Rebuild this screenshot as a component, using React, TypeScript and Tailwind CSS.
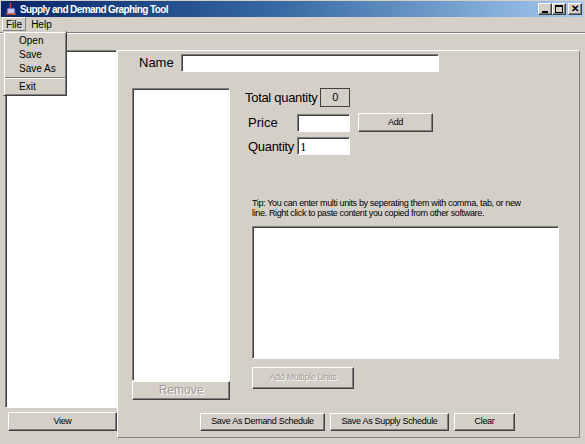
import React from "react";

const raised =
  "border border-t-white border-l-white border-r-[#404040] border-b-[#404040] shadow-[inset_-1px_-1px_0_#808080]";
const sunken =
  "border border-t-[#808080] border-l-[#808080] border-r-white border-b-white shadow-[inset_1px_1px_0_#404040]";

function Btn({
  children,
  className = "",
  disabled = false,
}: {
  children: React.ReactNode;
  className?: string;
  disabled?: boolean;
}) {
  return (
    <div
      className={`${raised} flex items-center justify-center bg-[#d4d0c8] text-[9px] tracking-[-0.3px] ${
        disabled ? "text-[#a09c94] [text-shadow:1px_1px_0_#fff]" : "text-black"
      } ${className}`}
    >
      {children}
    </div>
  );
}

function TitleButton({ children }: { children: React.ReactNode }) {
  return (
    <div className={`${raised} flex h-[12px] w-[14px] items-center justify-center bg-[#d4d0c8]`}>
      {children}
    </div>
  );
}

export default function App() {
  return (
    <div
      className="relative flex h-[444px] w-[585px] flex-col overflow-hidden bg-[#d4d0c8] text-black"
      style={{ fontFamily: '"Liberation Sans", Arial, sans-serif' }}
    >
      {/* title bar */}
      <div className="mx-[1px] mt-[1px] flex h-[16px] items-center bg-gradient-to-r from-[#0a246a] via-[#3a6ea5] to-[#a6caf0] pl-[3px] pr-[2px]">
        <svg width="14" height="14" viewBox="0 0 14 14" className="mr-[2px]">
          <path d="M6 1 C8 3 5 4 7 6" stroke="#e04020" strokeWidth="1.5" fill="none" />
          <rect x="3" y="6" width="8" height="6" rx="1" fill="#c9c3f0" stroke="#3030a0" />
          <path d="M2 12 H12" stroke="#e06020" strokeWidth="1.5" />
        </svg>
        <span className="text-[10px] font-bold tracking-[-0.6px] text-white">
          Supply and Demand Graphing Tool
        </span>
        <div className="ml-auto flex items-center">
          <TitleButton>
            <div className="mt-[5px] h-[2px] w-[6px] bg-black" />
          </TitleButton>
          <TitleButton>
            <div className="h-[8px] w-[8px] border border-t-2 border-black" />
          </TitleButton>
          <div className="ml-[2px]">
            <TitleButton>
              <span className="text-[10px] font-bold leading-none">✕</span>
            </TitleButton>
          </div>
        </div>
      </div>

      {/* menu bar */}
      <div className="flex h-[14px] items-center pl-[2px] text-[10px]">
        <div className="flex h-[14px] items-center border border-t-white border-l-white border-r-[#808080] border-b-[#808080] px-[3px]">
          File
        </div>
        <div className="px-[5px]">Help</div>
      </div>
      <div className="mt-[1px] h-[2px] border-t border-b border-t-[#808080] border-b-white" />

      {/* body */}
      <div className="flex flex-1 pt-[16px] pl-[5px] pr-[5px] pb-[6px]">
        {/* left column */}
        <div className="flex w-[112px] flex-col">
          <div className={`${sunken} h-[358px] bg-white`} />
          <Btn className="ml-[3px] mt-[4px] h-[19px] w-[109px]">View</Btn>
        </div>

        {/* right panel */}
        <div className="flex flex-1 flex-col border border-t-white border-l-white border-r-[#808080] border-b-[#808080]">
          <div className="flex items-center pt-[2px] pl-[21px]">
            <span className="text-[13px]">Name</span>
            <div className={`${sunken} ml-[7px] h-[18px] w-[258px] bg-white`} />
          </div>

          <div className="flex pt-[15px] pl-[14px]">
            <div className="flex flex-col">
              <div className={`${sunken} h-[293px] w-[98px] bg-white`} />
              <Btn disabled className="h-[19px] w-[98px] text-[12px] tracking-normal">
                Remove
              </Btn>
            </div>

            <div className="ml-[15px] flex flex-col">
              <div className="flex items-center">
                <span className="text-[13px] tracking-[-0.3px]">Total quantity</span>
                <div className="ml-[3px] flex h-[19px] w-[30px] items-center justify-center border border-[#404040] text-[11px]">
                  0
                </div>
              </div>
              <div className="mt-[6px] flex items-center pl-[3px]">
                <span className="w-[49px] text-[13px]">Price</span>
                <div className={`${sunken} h-[18px] w-[53px] bg-white`} />
                <Btn className="ml-[8px] h-[19px] w-[75px]">Add</Btn>
              </div>
              <div className="mt-[4px] flex items-center pl-[3px]">
                <span className="w-[49px] text-[13px] tracking-[-0.3px]">Quantity</span>
                <div
                  className={`${sunken} flex h-[18px] w-[53px] items-center bg-white pl-[2px] text-[13px]`}
                  style={{ fontFamily: '"Liberation Serif", serif' }}
                >
                  1
                </div>
              </div>

              <div className="mt-[42px] pl-[7px] text-[9px] leading-[10px] tracking-[-0.35px]">
                <div>Tip: You can enter multi units by seperating them with comma, tab, or new</div>
                <div>line. Right click to paste content you copied from other software.</div>
              </div>
              <div className={`${sunken} ml-[7px] mt-[8px] h-[133px] w-[307px] bg-white`} />
              <Btn disabled className="ml-[7px] mt-[8px] h-[22px] w-[102px]">
                Add Multiple Units
              </Btn>
            </div>
          </div>

          <div className="mt-auto mb-[6px] flex pl-[82px]">
            <Btn className="h-[18px] w-[125px]">Save As Demand Schedule</Btn>
            <Btn className="ml-[5px] h-[18px] w-[119px]">Save As Supply Schedule</Btn>
            <Btn className="ml-[5px] h-[18px] w-[61px]">Clear</Btn>
          </div>
        </div>
      </div>

      {/* File menu dropdown */}
      <div className="absolute left-[3px] top-[31px] flex w-[64px] flex-col border border-t-[#d4d0c8] border-l-[#d4d0c8] border-r-[#404040] border-b-[#404040] bg-[#d4d0c8] py-[1px] text-[10px] shadow-[inset_1px_1px_0_#fff,inset_-1px_-1px_0_#808080]">
        <div className="mt-[1px] h-[14px] pl-[15px] leading-[14px]">Open</div>
        <div className="h-[14px] pl-[15px] leading-[14px]">Save</div>
        <div className="h-[14px] pl-[15px] leading-[14px]">Save As</div>
        <div className="mx-[1px] my-[1px] h-[2px] border-t border-b border-t-[#808080] border-b-white" />
        <div className="h-[14px] pl-[15px] leading-[14px]">Exit</div>
      </div>
    </div>
  );
}
